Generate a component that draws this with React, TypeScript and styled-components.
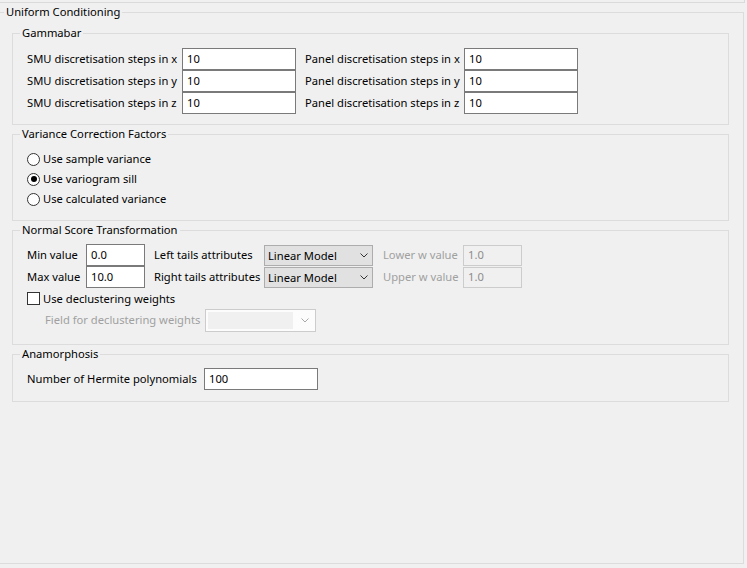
import React from "react";
import styled, { createGlobalStyle } from "styled-components";

const GlobalStyle = createGlobalStyle`
  html, body {
    margin: 0;
    padding: 0;
    background: #f0f0f0;
    overflow: hidden;
  }
  body {
    font-family: "Noto Sans", "Open Sans", sans-serif;
    font-size: 11.2px;
    color: #000;
  }
`;

const Page = styled.div`
  width: 747px;
  height: 568px;
  background: #f0f0f0;
`;

// strip of the panel above, only its bottom edge is visible
const TopStrip = styled.div`
  width: 744px;
  height: 2px;
  box-sizing: content-box;
  border-bottom: 1px solid #dadada;
  border-right: 1px solid #dadada;
`;

const GroupBox = styled.fieldset<{ $pb?: number; $pt?: number }>`
  margin: 0;
  min-width: 0;
  border: 1px solid #dcdcdc;
  padding: ${(p) => p.$pt ?? 6}px 12px ${(p) => p.$pb ?? 10}px 14px;
`;

const OuterBox = styled(GroupBox)`
  margin: 1px 0 0 -1px;
  width: 745px;
  height: 560px;
  box-sizing: border-box;
  padding: 5px 14px 0 12px;
`;

const Legend = styled.legend<{ $shift?: number }>`
  padding: 0 2px;
  margin-left: ${(p) => p.$shift ?? -7}px;
  line-height: 16px;
  height: 16px;
`;

const Sections = styled.div`
  display: flex;
  flex-direction: column;
  gap: 1px;
`;

const FieldGrid = styled.div<{ $cols: string; $rows?: string }>`
  display: grid;
  grid-template-columns: ${(p) => p.$cols};
  grid-auto-rows: ${(p) => p.$rows ?? "auto"};
  align-items: center;
`;

const Label = styled.span<{ $indent?: number; $disabled?: boolean; $w?: number }>`
  padding-left: ${(p) => p.$indent ?? 0}px;
  padding-bottom: 2px;
  width: ${(p) => (p.$w ? `${p.$w}px` : "auto")};
  box-sizing: border-box;
  flex-shrink: 0;
  white-space: nowrap;
  color: ${(p) => (p.$disabled ? "#a0a0a0" : "#000")};
`;

const TextBox = styled.div<{ $w: number; $h?: number; $disabled?: boolean }>`
  box-sizing: border-box;
  width: ${(p) => p.$w}px;
  height: ${(p) => p.$h ?? 22}px;
  border: 1px solid ${(p) => (p.$disabled ? "#cccccc" : "#7a7a7a")};
  background: ${(p) => (p.$disabled ? "#f0f0f0" : "#fff")};
  color: ${(p) => (p.$disabled ? "#8d8d8d" : "#000")};
  padding: 0 0 1px 4px;
  display: flex;
  align-items: center;
`;

const RadioList = styled.div`
  display: flex;
  flex-direction: column;
`;

const OptionRow = styled.label<{ $h?: number }>`
  display: flex;
  align-items: center;
  height: ${(p) => p.$h ?? 20}px;
  gap: 3px;
`;

const OptionText = styled.span`
  padding-bottom: 1px;
`;

const RadioCircle = styled.span<{ $checked?: boolean }>`
  box-sizing: border-box;
  width: 13px;
  height: 13px;
  border-radius: 50%;
  border: 1px solid #333;
  background: #fff;
  display: flex;
  align-items: center;
  justify-content: center;
  &::after {
    content: "";
    width: 6px;
    height: 6px;
    border-radius: 50%;
    background: ${(p) => (p.$checked ? "#000" : "transparent")};
  }
`;

const CheckSquare = styled.span`
  box-sizing: border-box;
  width: 13px;
  height: 13px;
  border: 1px solid #333;
  background: #fff;
`;

const Combo = styled.div<{ $w: number }>`
  box-sizing: border-box;
  width: ${(p) => p.$w}px;
  height: 21px;
  border: 1px solid #adadad;
  background: #e1e1e1;
  display: flex;
  align-items: center;
  justify-content: space-between;
  padding: 0 4px 0 3px;
`;

const DisabledCombo = styled.div<{ $w: number }>`
  box-sizing: border-box;
  width: ${(p) => p.$w}px;
  height: 23px;
  border: 1px solid #cccccc;
  background: #fcfcfc;
  display: flex;
  align-items: center;
  padding: 2px 6px 2px 2px;
  gap: 8px;
`;

const ComboField = styled.div`
  flex: 1;
  height: 100%;
  background: #f0f0f0;
`;

const Row = styled.div<{ $h: number }>`
  display: flex;
  align-items: center;
  height: ${(p) => p.$h}px;
`;

const Chevron = ({ color = "#333" }: { color?: string }) => (
  <svg width="8" height="5" viewBox="0 0 8 5">
    <polyline points="0.5,0.5 4,4 7.5,0.5" fill="none" stroke={color} strokeWidth="1" />
  </svg>
);

const App = () => {
  const axes = ["x", "y", "z"];
  return (
    <Page>
      <GlobalStyle />
      <TopStrip />
      <OuterBox>
        <Legend $shift={-8}>Uniform Conditioning</Legend>
        <Sections>
          <GroupBox $pt={7} $pb={10}>
            <Legend>Gammabar</Legend>
            <FieldGrid $cols="155px 114px 168px 114px">
              {axes.map((a) => (
                <React.Fragment key={a}>
                  <Label>SMU discretisation steps in {a}</Label>
                  <TextBox $w={114}>10</TextBox>
                  <Label $indent={9}>Panel discretisation steps in {a}</Label>
                  <TextBox $w={114}>10</TextBox>
                </React.Fragment>
              ))}
            </FieldGrid>
          </GroupBox>

          <GroupBox $pt={7} $pb={11}>
            <Legend>Variance Correction Factors</Legend>
            <RadioList>
              <OptionRow>
                <RadioCircle />
                <OptionText>Use sample variance</OptionText>
              </OptionRow>
              <OptionRow>
                <RadioCircle $checked />
                <OptionText>Use variogram sill</OptionText>
              </OptionRow>
              <OptionRow>
                <RadioCircle />
                <OptionText>Use calculated variance</OptionText>
              </OptionRow>
            </RadioList>
          </GroupBox>

          <GroupBox $pt={6} $pb={12}>
            <Legend>Normal Score Transformation</Legend>
            <FieldGrid $cols="59px 59px 119px 109px 90px 59px" $rows="22px">
              <Label>Min value</Label>
              <TextBox $w={59}>0.0</TextBox>
              <Label $indent={9}>Left tails attributes</Label>
              <Combo $w={109}>
                Linear Model
                <Chevron />
              </Combo>
              <Label $indent={10} $disabled>
                Lower w value
              </Label>
              <TextBox $w={59} $h={21} $disabled>
                1.0
              </TextBox>
              <Label>Max value</Label>
              <TextBox $w={59}>10.0</TextBox>
              <Label $indent={9}>Right tails attributes</Label>
              <Combo $w={109}>
                Linear Model
                <Chevron />
              </Combo>
              <Label $indent={10} $disabled>
                Upper w value
              </Label>
              <TextBox $w={59} $h={21} $disabled>
                1.0
              </TextBox>
            </FieldGrid>
            <OptionRow $h={21}>
              <CheckSquare />
              <OptionText>Use declustering weights</OptionText>
            </OptionRow>
            <Row $h={23}>
              <Label $indent={18} $disabled $w={178}>
                Field for declustering weights
              </Label>
              <DisabledCombo $w={111}>
                <ComboField />
                <Chevron color="#a8a8a8" />
              </DisabledCombo>
            </Row>
          </GroupBox>

          <GroupBox $pt={6} $pb={11}>
            <Legend>Anamorphosis</Legend>
            <FieldGrid $cols="177px 114px">
              <Label>Number of Hermite polynomials</Label>
              <TextBox $w={114}>100</TextBox>
            </FieldGrid>
          </GroupBox>
        </Sections>
      </OuterBox>
    </Page>
  );
};

export default App;
